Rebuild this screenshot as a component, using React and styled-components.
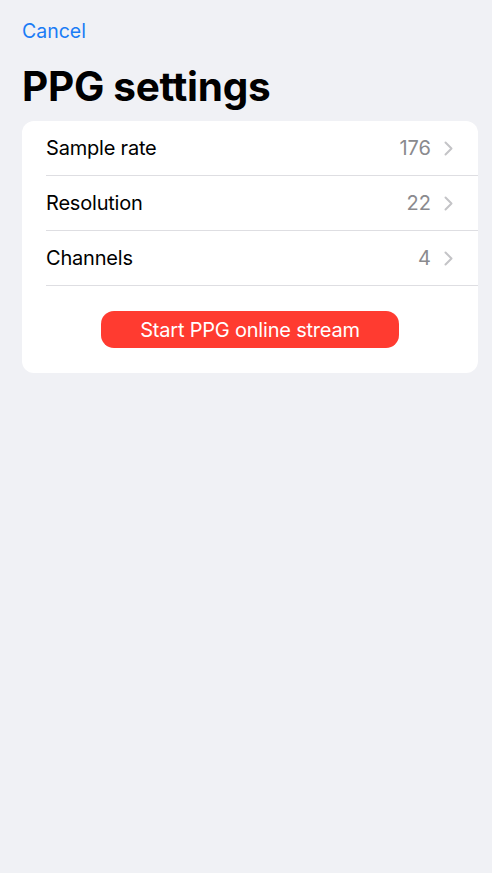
import React from "react";
import styled, { createGlobalStyle } from "styled-components";

const Global = createGlobalStyle`
  html, body {
    margin: 0;
    padding: 0;
    background: #f0f1f5;
  }
  body {
    font-family: Inter, "Noto Sans", sans-serif;
    -webkit-font-smoothing: antialiased;
  }
`;

const Screen = styled.div`
  width: 492px;
  min-height: 873px;
  background: #f0f1f5;
  padding: 0 14px 0 22px;
  box-sizing: border-box;
  display: flex;
  flex-direction: column;
`;

const NavBar = styled.div`
  height: 62px;
  display: flex;
  align-items: center;
`;

const CancelButton = styled.button`
  border: none;
  background: none;
  padding: 0;
  font-family: inherit;
  font-size: 19.5px;
  color: #1a7cf5;
  cursor: pointer;
`;

const Title = styled.h1`
  margin: 0;
  height: 59px;
  font-size: 40.5px;
  font-weight: 700;
  letter-spacing: -0.3px;
  color: #000;
  line-height: 50px;
`;

const Card = styled.div`
  background: #fff;
  border-radius: 12px;
  display: flex;
  flex-direction: column;
  padding-left: 24px;
  padding-bottom: 25px;
`;

const Row = styled.div`
  height: 55px;
  display: flex;
  align-items: center;
  justify-content: space-between;
  padding-right: 25px;
  border-bottom: 1px solid #dedee2;
  box-sizing: border-box;
`;

const Label = styled.span`
  font-size: 20px;
  color: #000;
  letter-spacing: -0.2px;
`;

const Value = styled.span`
  display: flex;
  align-items: center;
  gap: 13px;
  font-size: 20px;
  color: #8a8a8e;
`;

const ButtonWrap = styled.div`
  display: flex;
  justify-content: center;
  padding-top: 25px;
  margin-left: -24px;
`;

const StartButton = styled.button`
  width: 298px;
  height: 37px;
  border: none;
  border-radius: 13px;
  background: #ff3b30;
  color: #fff;
  font-family: inherit;
  font-size: 20px;
  letter-spacing: -0.2px;
  cursor: pointer;
`;

const Chevron = () => (
  <svg width="9" height="15" viewBox="0 0 9 15" fill="none">
    <path d="M1.5 1.5 L7.5 7.5 L1.5 13.5" stroke="#c4c4c7" strokeWidth="2" strokeLinecap="round" strokeLinejoin="round" />
  </svg>
);

const settings = [
  { label: "Sample rate", value: "176" },
  { label: "Resolution", value: "22" },
  { label: "Channels", value: "4" },
];

export default function App() {
  return (
    <>
      <Global />
      <Screen>
        <NavBar>
          <CancelButton>Cancel</CancelButton>
        </NavBar>
        <Title>PPG settings</Title>
        <Card>
          {settings.map((s) => (
            <Row key={s.label}>
              <Label>{s.label}</Label>
              <Value>
                {s.value}
                <Chevron />
              </Value>
            </Row>
          ))}
          <ButtonWrap>
            <StartButton>Start PPG online stream</StartButton>
          </ButtonWrap>
        </Card>
      </Screen>
    </>
  );
}
